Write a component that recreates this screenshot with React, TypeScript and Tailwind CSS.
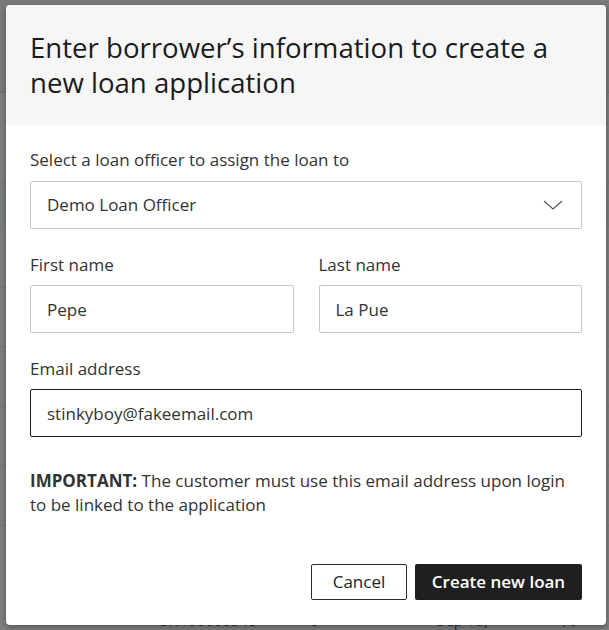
import React from "react";

function Field({
  label,
  value,
  focused,
}: {
  label: string;
  value: string;
  focused?: boolean;
}) {
  return (
    <label className="flex flex-col">
      <span className="mb-2 text-[17px] leading-6 text-[#333333]">{label}</span>
      <input
        readOnly
        value={value}
        className={
          focused
            ? "h-12 w-full rounded-[2px] border border-[#1c1c1c] bg-white px-4 text-[17px] text-[#333333] outline-none"
            : "h-12 w-full rounded-[2px] border border-[#c8c8c8] bg-white px-4 text-[17px] text-[#333333] outline-none"
        }
        style={{ fontFamily: "inherit" }}
      />
    </label>
  );
}

export default function App() {
  return (
    <div
      className="relative h-[630px] w-[609px] overflow-hidden bg-[#7f7f7f]"
      style={{ fontFamily: '"Open Sans", "Noto Sans", sans-serif' }}
    >
      {/* page behind the overlay */}
      <div className="absolute inset-0 flex flex-col">
        <div className="h-[94px] border-b border-[#6e6e6e] bg-[#7a7a7a]" />
        <div className="h-[90px] border-b border-[#767676]" />
        <div className="h-[46px] bg-[#7a7e7d]" />
        <div className="h-[60px] border-b border-[#767676]" />
        <div className="h-[60px] border-b border-[#767676]" />
        <div className="h-[60px] border-b border-[#767676]" />
        <div className="h-[60px] border-b border-[#767676]" />
        <div className="h-[60px] border-b border-[#767676]" />
        <div className="flex pt-[84px] text-[15px] leading-5 text-[#2e2e2e]">
          <span className="ml-[160px] w-[150px]">SN100000548</span>
          <span className="w-[127px]">0</span>
          <span className="w-[123px]">Sep 18,</span>
          <span>$0</span>
        </div>
      </div>

      {/* modal */}
      <div className="absolute left-[6px] top-[5px] flex h-[620px] w-[600px] flex-col overflow-hidden rounded-[4px] bg-white shadow-[0_2px_6px_rgba(0,0,0,0.35)]">
        <div className="bg-[#f6f6f6] px-6 py-[25px]">
          <h2 className="text-[27.6px] font-medium leading-[35px] text-[#1b1b1b]">
            Enter borrower’s information to create a new loan application
          </h2>
        </div>

        <div className="flex flex-1 flex-col px-6 pt-[23px] pb-[25px]">
          <div className="flex flex-col">
            <span className="mb-[9px] text-[17px] leading-6 text-[#333333]">
              Select a loan officer to assign the loan to
            </span>
            <div className="flex h-12 items-center justify-between rounded-[2px] border border-[#c8c8c8] bg-white pl-4 pr-[18px]">
              <span className="text-[17px] text-[#333333]">Demo Loan Officer</span>
              <svg width="20" height="10" viewBox="0 0 20 10" fill="none">
                <path d="M1 1l9 8 9-8" stroke="#555555" strokeWidth="1.2" />
              </svg>
            </div>
          </div>

          <div className="mt-6 grid grid-cols-2 gap-[25px]">
            <Field label="First name" value="Pepe" />
            <Field label="Last name" value="La Pue" />
          </div>

          <div className="mt-6">
            <Field label="Email address" value="stinkyboy@fakeemail.com" focused />
          </div>

          <p className="mt-8 text-[17px] leading-6 text-[#333333]">
            <span className="font-bold">IMPORTANT:</span> The customer must use this email
            address upon login to be linked to the application
          </p>

          <div className="mt-auto flex justify-end gap-2">
            <button
              type="button"
              className="h-9 w-[96px] rounded-[2px] border border-[#2b2b2b] bg-white text-[17px] text-[#222222]"
            >
              Cancel
            </button>
            <button
              type="button"
              className="h-9 w-[167px] rounded-[2px] bg-[#1f1f1f] text-[17px] font-semibold text-white"
            >
              Create new loan
            </button>
          </div>
        </div>
      </div>
    </div>
  );
}
